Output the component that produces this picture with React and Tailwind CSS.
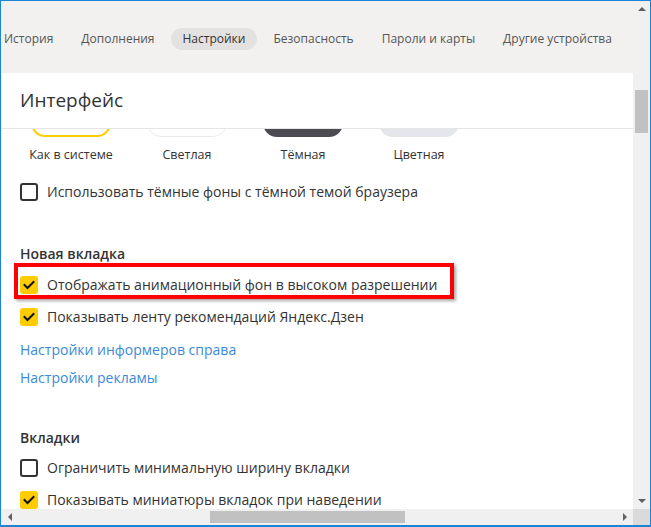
import React from "react";

const font = { fontFamily: '"Open Sans", "Noto Sans", sans-serif' };

function Check() {
  return (
    <svg width="12" height="10" viewBox="0 0 12 10" fill="none">
      <path d="M1.5 5 L4.5 8 L10.5 2" stroke="#111" strokeWidth="2" strokeLinecap="square" />
    </svg>
  );
}

function Box({ checked }) {
  if (checked)
    return (
      <div className="w-[18px] h-[18px] rounded-[3px] bg-[#ffcc00] flex items-center justify-center shrink-0">
        <Check />
      </div>
    );
  return <div className="w-[18px] h-[18px] rounded-[3px] border-2 border-[#333] shrink-0" />;
}

function Row({ checked, children, highlight }) {
  return (
    <div className="relative h-[32px] flex items-center">
      <Box checked={checked} />
      <span className="ml-[9px] text-[14px] text-[#333] leading-none">{children}</span>
      {highlight && (
        <div className="absolute left-[-6px] top-[-6px] w-[440px] h-[36px] border-[4px] border-[#ff0000] shadow-[2px_2px_3px_rgba(0,0,0,0.35)]" />
      )}
    </div>
  );
}

const tabs = ["История", "Дополнения", "Настройки", "Безопасность", "Пароли и карты", "Другие устройства"];

function Thumb({ cls }) {
  return (
    <div className="h-[8px] overflow-hidden w-[80px]">
      <div className={"h-[60px] -mt-[52px] rounded-[14px] " + cls} />
    </div>
  );
}

export default function App() {
  return (
    <div style={font} className="w-[651px] h-[527px] border-x border-t border-b-2 border-[#1a84d6] flex flex-col overflow-hidden bg-[#f2f1f0]">
      <div className="flex flex-1 min-h-0">
        <div className="flex-1 min-w-0 flex flex-col">
          <div className="h-[72px] pt-[4px] flex items-center whitespace-nowrap text-[12px] text-[#555] gap-[4px] -ml-[9px]">
            {tabs.map((t) => (
              <div
                key={t}
                className={
                  "h-[22px] px-[12px] flex items-center rounded-full " +
                  (t === "Настройки" ? "bg-[#e3e2e1] text-[#333]" : "")
                }
              >
                {t}
              </div>
            ))}
          </div>
          <div className="flex-1 min-h-0 bg-white flex flex-col">
            <div className="h-[56px] border-b border-[#e5e5e5] flex items-center pl-[19px] text-[19px] text-[#333] shrink-0">
              Интерфейс
            </div>
            <div className="flex-1 min-h-0 overflow-hidden pl-[19px]">
              <div className="flex -ml-[7px]">
                {[
                  ["Как в системе", "border-2 border-[#ffcc00] bg-white"],
                  ["Светлая", "border border-[#ebebeb] bg-white"],
                  ["Тёмная", "bg-[#4b4b51]"],
                  ["Цветная", "bg-[#e3e6eb]"],
                ].map(([l, c]) => (
                  <div key={l} className="w-[116px] flex flex-col items-center">
                    <Thumb cls={c} />
                    <div className="mt-[8px] h-[20px] flex items-center text-[12.5px] text-[#333]">{l}</div>
                  </div>
                ))}
              </div>
              <div className="mt-[11px]">
                <Row>Использовать тёмные фоны с тёмной темой браузера</Row>
              </div>
              <div className="mt-[33px] h-[24px] flex items-center text-[14px] font-semibold text-[#333]">Новая вкладка</div>
              <div className="mt-[4px]">
                <Row checked highlight>Отображать анимационный фон в высоком разрешении</Row>
                <Row checked>Показывать ленту рекомендаций Яндекс.Дзен</Row>
              </div>
              <div className="mt-[2px] h-[28px] flex items-center text-[14px] text-[#3a8ad8]">Настройки информеров справа</div>
              <div className="h-[28px] flex items-center text-[14px] text-[#3a8ad8]">Настройки рекламы</div>
              <div className="mt-[34px] h-[24px] flex items-center text-[14px] font-semibold text-[#333]">Вкладки</div>
              <div className="mt-[3px]">
                <Row>Ограничить минимальную ширину вкладки</Row>
                <Row checked>Показывать миниатюры вкладок при наведении</Row>
              </div>
            </div>
          </div>
        </div>
        <div className="w-[17px] bg-[#f0f0f0] flex flex-col items-center shrink-0">
          <div className="h-[16px] flex items-center justify-center">
            <div className="w-0 h-0 border-x-[4px] border-x-transparent border-b-[4px] border-b-[#606060]" />
          </div>
          <div className="mt-[73px] w-[13px] h-[43px] bg-[#c1c1c1]" />
          <div className="flex-1" />
          <div className="h-[16px] flex items-center justify-center">
            <div className="w-0 h-0 border-x-[4px] border-x-transparent border-t-[4px] border-t-[#606060]" />
          </div>
        </div>
      </div>
      <div className="h-[16px] flex shrink-0">
        <div className="flex-1 bg-[#f0f0f0] flex items-center">
          <div className="w-[17px] flex justify-center">
            <div className="w-0 h-0 border-y-[4px] border-y-transparent border-r-[4px] border-r-[#606060]" />
          </div>
          <div className="ml-[192px] w-[195px] h-[12px] bg-[#c1c1c1]" />
          <div className="flex-1" />
          <div className="w-[17px] flex justify-center">
            <div className="w-0 h-0 border-y-[4px] border-y-transparent border-l-[4px] border-l-[#606060]" />
          </div>
        </div>
        <div className="w-[17px] bg-[#dadada]" />
      </div>
    </div>
  );
}
